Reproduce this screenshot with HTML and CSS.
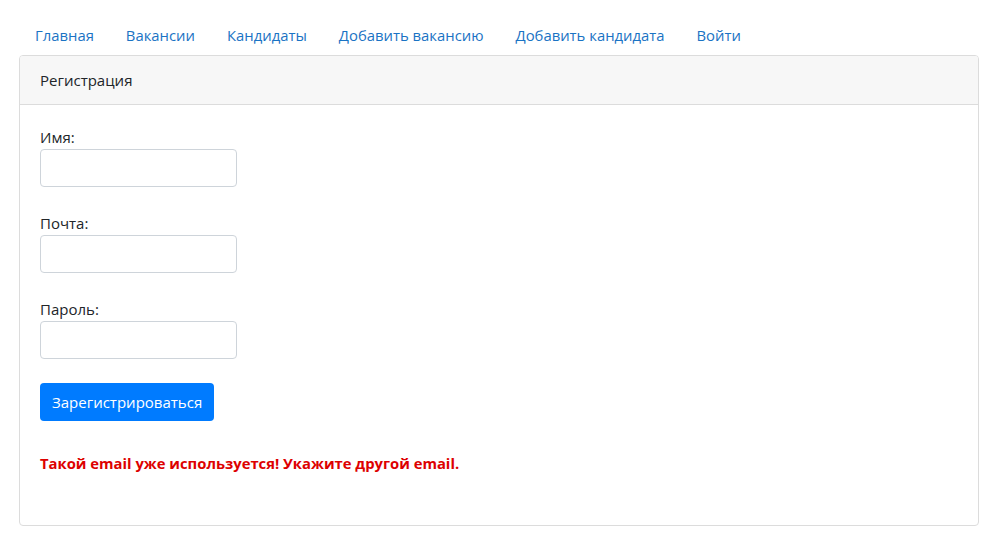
FILE: index.html
```html
<!DOCTYPE html>
<html lang="ru">
<head>
<meta charset="utf-8">
<title>Регистрация</title>
<link rel="stylesheet" href="styles.css">
</head>
<body>
<div class="container">
  <ul class="nav">
    <li><a class="nav-link" href="#">Главная</a></li>
    <li><a class="nav-link" href="#">Вакансии</a></li>
    <li><a class="nav-link" href="#">Кандидаты</a></li>
    <li><a class="nav-link" href="#">Добавить вакансию</a></li>
    <li><a class="nav-link" href="#">Добавить кандидата</a></li>
    <li><a class="nav-link" href="#">Войти</a></li>
  </ul>
  <div class="card">
    <div class="card-header">Регистрация</div>
    <div class="card-body">
      <form class="form">
        <div class="form-group">
          <label class="label">Имя:</label>
          <input class="input" type="text">
        </div>
        <div class="form-group">
          <label class="label">Почта:</label>
          <input class="input" type="text">
        </div>
        <div class="form-group">
          <label class="label">Пароль:</label>
          <input class="input" type="password">
        </div>
        <button class="btn" type="button">Зарегистрироваться</button>
      </form>
      <div class="error">Такой email уже используется! Укажите другой email.</div>
    </div>
  </div>
</div>
</body>
</html>
```
FILE: styles.css
```css
* { box-sizing: border-box; }
html, body {
  margin: 0;
  padding: 0;
  background: #fff;
}
body {
  font-family: "Open Sans", "Noto Sans", "Liberation Sans", sans-serif;
  font-size: 15px;
  line-height: 24px;
  color: #212529;
}
.container {
  width: 960px;
  margin: 0 auto;
  padding-top: 15px;
}
.nav {
  display: flex;
  list-style: none;
  margin: 0;
  padding: 0;
}
.nav-link {
  display: block;
  padding: 8px 16px;
  color: #1a73c4;
  text-decoration: none;
  font-size: 14.85px;
}
.card {
  border: 1px solid #dcdcdc;
  border-radius: 4px;
  height: 471px;
}
.card-header {
  background: #f7f7f7;
  border-bottom: 1px solid #dcdcdc;
  padding: 12px 20px;
  border-radius: 3px 3px 0 0;
}
.card-body {
  padding: 20px;
}
.form {
  display: flex;
  flex-direction: column;
  align-items: flex-start;
  gap: 24px;
}
.form-group {
  display: flex;
  flex-direction: column;
}
.label {
  display: block;
}
.input {
  width: 197px;
  height: 38px;
  border: 1px solid #ced4da;
  border-radius: 4px;
  background: #fff;
}
.btn {
  height: 38px;
  padding: 0 12px;
  background: #007bff;
  color: #fff;
  border: none;
  border-radius: 4px;
  font-family: inherit;
  font-size: 15px;
  line-height: 24px;
}
.error {
  margin-top: 30px;
  color: #dd0000;
  font-weight: bold;
  font-size: 14.8px;
}
```
